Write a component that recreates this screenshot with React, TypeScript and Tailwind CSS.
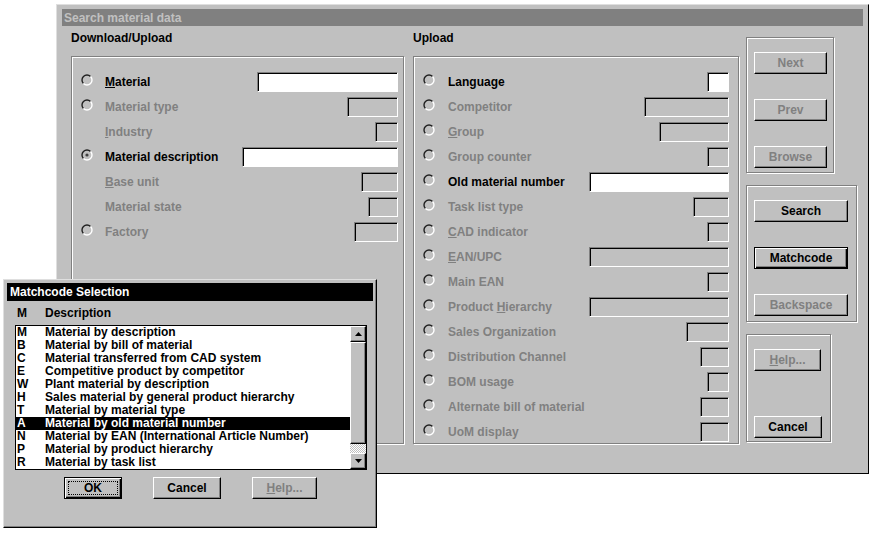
import React from 'react';

type Row = {
  label: string;
  on?: boolean;
  radio?: boolean;
  checked?: boolean;
  w: string;
  white?: boolean;
};

const leftRows: Row[] = [
  { label: '&Material', on: true, radio: true, w: 'w-[141px]', white: true },
  { label: 'Material type', radio: true, w: 'w-[51px]' },
  { label: '&Industry', w: 'w-[23px]' },
  { label: 'Material description', on: true, radio: true, checked: true, w: 'w-[156px]', white: true },
  { label: '&Base unit', w: 'w-[37px]' },
  { label: 'Material state', w: 'w-[30px]' },
  { label: 'Factory', radio: true, w: 'w-[44px]' },
];

const rightRows: Row[] = [
  { label: 'Language', on: true, radio: true, w: 'w-[22px]', white: true },
  { label: 'Competitor', radio: true, w: 'w-[85px]' },
  { label: '&Group', radio: true, w: 'w-[70px]' },
  { label: 'Group counter', radio: true, w: 'w-[22px]' },
  { label: 'Old material number', on: true, radio: true, w: 'w-[140px]', white: true },
  { label: 'Task list type', radio: true, w: 'w-[36px]' },
  { label: '&CAD indicator', radio: true, w: 'w-[22px]' },
  { label: '&EAN/UPC', radio: true, w: 'w-[140px]' },
  { label: 'Main EAN', radio: true, w: 'w-[22px]' },
  { label: 'Product &Hierarchy', radio: true, w: 'w-[140px]' },
  { label: 'Sales Organization', radio: true, w: 'w-[43px]' },
  { label: 'Distribution Channel', radio: true, w: 'w-[29px]' },
  { label: 'BOM usage', radio: true, w: 'w-[22px]' },
  { label: 'Alternate bill of material', radio: true, w: 'w-[29px]' },
  { label: 'UoM display', radio: true, w: 'w-[29px]' },
];

const matchcodes = [
  ['M', 'Material by description'],
  ['B', 'Material by bill of material'],
  ['C', 'Material transferred from CAD system'],
  ['E', 'Competitive product by competitor'],
  ['W', 'Plant material by description'],
  ['H', 'Sales material by general product hierarchy'],
  ['T', 'Material by material type'],
  ['A', 'Material by old material number'],
  ['N', 'Material by EAN (International Article Number)'],
  ['P', 'Material by product hierarchy'],
  ['R', 'Material by task list'],
];

// "&X" marks the mnemonic letter
function Mnemonic({ text }: { text: string }) {
  const i = text.indexOf('&');
  if (i < 0) return <>{text}</>;
  return (
    <>
      {text.slice(0, i)}
      <u>{text.charAt(i + 1)}</u>
      {text.slice(i + 2)}
    </>
  );
}

function Radio({ checked }: { checked?: boolean }) {
  return (
    <svg width="12" height="12" viewBox="0 0 12 12" className="-mt-[3px]">
      <circle cx="6" cy="6" r="5" fill="#c0c0c0" />
      <path d="M2.46 9.54A5 5 0 0 1 9.54 2.46" fill="none" stroke="#202020" strokeWidth="1.4" />
      <path d="M9.54 2.46A5 5 0 0 1 2.46 9.54" fill="none" stroke="#ffffff" strokeWidth="1.4" />
      {checked && <circle cx="6" cy="6" r="1.6" fill="#404040" />}
    </svg>
  );
}

function Field({ w, white }: { w: string; white?: boolean }) {
  return (
    <div
      className={`${w} h-[20px] border border-t-[#808080] border-l-[#808080] border-b-white border-r-white shadow-[inset_1px_1px_0_#000] ${
        white ? 'bg-white' : 'bg-[#c0c0c0]'
      }`}
    />
  );
}

function Btn({
  label,
  w,
  disabled,
  isDefault,
  focus,
}: {
  label: string;
  w: string;
  disabled?: boolean;
  isDefault?: boolean;
  focus?: boolean;
}) {
  const frame = isDefault
    ? 'border-black shadow-[inset_1px_1px_0_#fff,inset_-1px_-1px_0_#000,inset_-2px_-2px_0_#808080]'
    : 'border-t-white border-l-white border-b-black border-r-black shadow-[inset_-1px_-1px_0_#808080]';
  return (
    <div
      className={`${w} h-[22px] flex items-stretch p-[3px] border bg-[#c0c0c0] ${frame} ${
        disabled ? 'text-[#808080]' : 'text-black'
      }`}
    >
      <div
        className={`flex-1 flex items-center justify-center leading-none ${
          focus ? 'border border-dotted border-black' : 'border border-transparent'
        }`}
      >
        <Mnemonic text={label} />
      </div>
    </div>
  );
}

function Etched({ className, children }: { className: string; children?: React.ReactNode }) {
  return (
    <div
      className={`border border-[#808080] shadow-[inset_1px_1px_0_#fff,1px_1px_0_#fff] ${className}`}
    >
      {children}
    </div>
  );
}

function FieldRows({ rows, slot }: { rows: Row[]; slot: string }) {
  return (
    <>
      {rows.map((r) => (
        <div key={r.label} className="h-[25px] flex items-center">
          <div className={`${slot} flex items-center`}>{r.radio && <Radio checked={r.checked} />}</div>
          <div className={`flex-1 ${r.on ? 'text-black' : 'text-[#808080]'}`}>
            <Mnemonic text={r.label} />
          </div>
          <Field w={r.w} white={r.white} />
        </div>
      ))}
    </>
  );
}

function Arrow({ up }: { up?: boolean }) {
  return (
    <div className="w-[16px] h-[16px] flex items-center justify-center border border-t-white border-l-white border-b-black border-r-black shadow-[inset_-1px_-1px_0_#808080] bg-[#c0c0c0]">
      <svg width="7" height="4" viewBox="0 0 7 4">
        <path d={up ? 'M3.5 0L7 4H0Z' : 'M0 0H7L3.5 4Z'} fill="#000" />
      </svg>
    </div>
  );
}

export default function App(): React.JSX.Element {
  return (
    <div className="relative w-[873px] h-[533px] bg-white overflow-hidden font-['Liberation_Sans',Arial,sans-serif] text-[12px] font-bold leading-[14px]">
      {/* main window */}
      <div className="absolute left-[56px] top-[4px] w-[813px] h-[470px] bg-[#c0c0c0] border border-t-[#dfdfdf] border-l-[#dfdfdf] border-b-black border-r-black pt-[4px] px-[5px]">
        <div className="h-[17px] bg-[#808080] text-[#c0c0c0] pl-[2px] flex items-center">Search material data</div>
        <div className="flex pl-[9px]">
          <div className="w-[333px] pt-[5px]">
            <div className="h-[14px] mb-[11px]">Download/Upload</div>
            <Etched className="h-[388px] pt-[12px] pl-[9px] pr-[5px]">
              <FieldRows rows={leftRows} slot="w-[24px]" />
            </Etched>
          </div>
          <div className="w-[326px] ml-[9px] pt-[5px]">
            <div className="h-[14px] mb-[11px]">Upload</div>
            <Etched className="h-[388px] pt-[12px] pl-[9px] pr-[9px]">
              <FieldRows rows={rightRows} slot="w-[25px]" />
            </Etched>
          </div>
          <div className="ml-[7px] pt-[11px] flex flex-col gap-[12px]">
            <Etched className="w-[88px] h-[136px] pt-[14px] pl-[7px] flex flex-col gap-[25px]">
              <Btn label="Next" w="w-[73px]" disabled />
              <Btn label="Prev" w="w-[73px]" disabled />
              <Btn label="Browse" w="w-[73px]" disabled />
            </Etched>
            <Etched className="w-[111px] h-[137px] pt-[14px] pl-[7px] flex flex-col gap-[25px]">
              <Btn label="Search" w="w-[94px]" />
              <Btn label="Matchcode" w="w-[94px]" isDefault />
              <Btn label="Backspace" w="w-[94px]" disabled />
            </Etched>
            <Etched className="w-[85px] h-[108px] pt-[14px] pl-[7px] flex flex-col">
              <Btn label="&Help..." w="w-[67px]" disabled />
              <div className="mt-[45px]">
                <Btn label="Cancel" w="w-[68px]" />
              </div>
            </Etched>
          </div>
        </div>
      </div>

      {/* matchcode selection popup */}
      <div className="absolute left-[3px] top-[279px] w-[374px] h-[249px] bg-[#c0c0c0] border border-t-[#dfdfdf] border-l-[#dfdfdf] border-b-black border-r-black shadow-[inset_-1px_-1px_0_#808080] p-[3px]">
        <div className="h-[18px] bg-black text-white pl-[3px] flex items-center">Matchcode Selection</div>
        <div className="h-[14px] mt-[5px] pl-[10px] flex">
          <div className="w-[28px]">M</div>
          <div>Description</div>
        </div>
        <div className="ml-[8px] mt-[5px] w-[352px] h-[145px] border border-black bg-white flex">
          <div className="flex-1">
            {matchcodes.map(([k, d]) => (
              <div
                key={k}
                className={`h-[13px] leading-[13px] flex pl-[1px] ${k === 'A' ? 'bg-black text-white' : 'text-black'}`}
              >
                <div className="w-[28px]">{k}</div>
                <div className="whitespace-nowrap">{d}</div>
              </div>
            ))}
          </div>
          <div className="w-[16px] flex flex-col bg-[#c0c0c0]">
            <Arrow up />
            <div className="h-[102px] border border-t-white border-l-white border-b-black border-r-black shadow-[inset_-1px_-1px_0_#808080]" />
            <div className="h-[9px] bg-[repeating-conic-gradient(#ffffff_0%_25%,#c0c0c0_0%_50%)] bg-[length:2px_2px]" />
            <Arrow />
          </div>
        </div>
        <div className="mt-[7px] ml-[57px] flex gap-[31px]">
          <Btn label="OK" w="w-[58px]" isDefault focus />
          <Btn label="Cancel" w="w-[68px]" />
          <Btn label="&Help..." w="w-[65px]" disabled />
        </div>
      </div>
    </div>
  );
}
